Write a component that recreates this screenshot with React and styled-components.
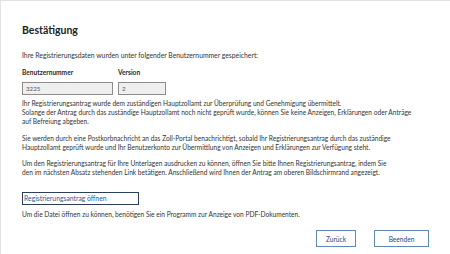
import React from 'react'
import styled, { createGlobalStyle } from 'styled-components'

const Global = createGlobalStyle`
  html, body { margin: 0; padding: 0; background: #fff; }
  body { font-family: Lato, "Open Sans", sans-serif; color: #333; }
  * { box-sizing: border-box; }
`

const Frame = styled.div`
  width: 450px;
  height: 254px;
  border-top: 1px solid #e2e2e2;
  border-left: 1px solid #e2e2e2;
  padding: 23px 21px 0 21px;
  display: flex;
  flex-direction: column;
`

const Title = styled.h1`
  margin: 0;
  font-size: 10.5px;
  line-height: 12px;
  font-weight: 700;
  color: #222;
`

const Intro = styled.p`
  margin: 15px 0 0;
  font-size: 6.8px;
  line-height: 9px;
`

const Fields = styled.div`
  display: flex;
  gap: 5px;
  margin-top: 8px;
`

const Field = styled.div`
  display: flex;
  flex-direction: column;
  gap: 5px;
`

const Label = styled.label`
  font-size: 6.6px;
  line-height: 9px;
  font-weight: 700;
  color: #2a2a2a;
`

const Input = styled.div`
  width: ${p => p.$w}px;
  height: 13px;
  background: #efefef;
  border: 1px solid #8c8c8c;
  font-size: 6.2px;
  line-height: 11px;
  padding-left: 3px;
  color: #555;
`

const Para = styled.p`
  margin: ${p => p.$gap}px 0 0;
  font-size: 6.6px;
  line-height: 9px;
  width: 408px;
`

const LinkBox = styled.a`
  display: block;
  width: 117px;
  height: 13px;
  margin-top: 15px;
  border: 1px solid #2c3e58;
  font-size: 6.8px;
  line-height: 10px;
  padding-left: 1px;
  color: #2a5a9a;
  text-decoration: none;
`

const Footer = styled.div`
  display: flex;
  justify-content: flex-end;
  gap: 18px;
  margin-top: 11px;
`

const Button = styled.button`
  width: ${p => p.$w}px;
  height: 17px;
  background: #fff;
  border: 1px solid #5f88b2;
  font-family: inherit;
  font-size: 6.6px;
  color: #234a7a;
  padding: 0;
`

export default function App() {
  return (
    <>
      <Global />
      <Frame>
        <Title>Bestätigung</Title>
        <Intro>Ihre Registrierungsdaten wurden unter folgender Benutzernummer gespeichert:</Intro>
        <Fields>
          <Field>
            <Label>Benutzernummer</Label>
            <Input $w={91}>3225</Input>
          </Field>
          <Field>
            <Label>Version</Label>
            <Input $w={48}>2</Input>
          </Field>
        </Fields>
        <Para $gap={4}>
          Ihr Registrierungsantrag wurde dem zuständigen Hauptzollamt zur Überprüfung und Genehmigung übermittelt.
          <br />
          Solange der Antrag durch das zuständige Hauptzollamt noch nicht geprüft wurde, können Sie keine Anzeigen, Erklärungen oder Anträge
          <br />
          auf Befreiung abgeben.
        </Para>
        <Para $gap={8}>
          Sie werden durch eine Postkorbnachricht an das Zoll-Portal benachrichtigt, sobald Ihr Registrierungsantrag durch das zuständige
          <br />
          Hauptzollamt geprüft wurde und Ihr Benutzerkonto zur Übermittlung von Anzeigen und Erklärungen zur Verfügung steht.
        </Para>
        <Para $gap={7}>
          Um den Registrierungsantrag für Ihre Unterlagen ausdrucken zu können, öffnen Sie bitte Ihnen Registrierungsantrag, indem Sie
          <br />
          den im nächsten Absatz stehenden Link betätigen. Anschließend wird Ihnen der Antrag am oberen Bildschirmrand angezeigt.
        </Para>
        <LinkBox href="#">Registrierungsantrag öffnen</LinkBox>
        <Para $gap={5}>
          Um die Datei öffnen zu können, benötigen Sie ein Programm zur Anzeige von PDF-Dokumenten.
        </Para>
        <Footer>
          <Button $w={40}>Zurück</Button>
          <Button $w={55}>Beenden</Button>
        </Footer>
      </Frame>
    </>
  )
}
